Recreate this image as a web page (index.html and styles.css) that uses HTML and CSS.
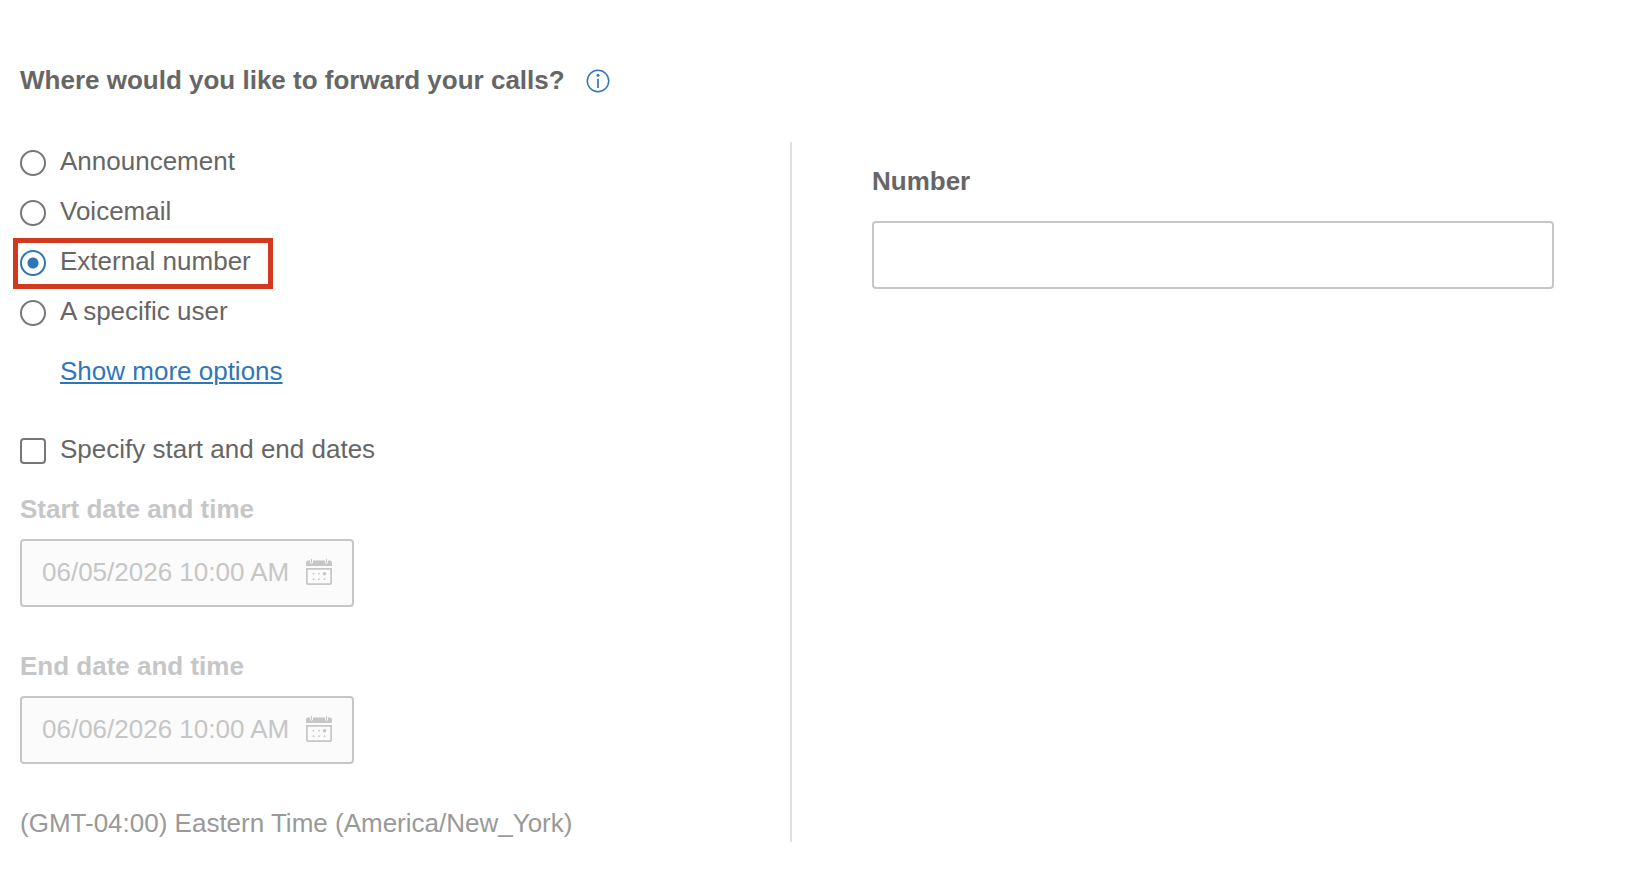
FILE: index.html
```html
<!DOCTYPE html>
<html lang="en">
<head>
    <meta charset="UTF-8">
    <meta name="viewport" content="width=device-width, initial-scale=1.0">
    <title>Call forwarding</title>
    <link rel="stylesheet" href="styles.css">
</head>
<body>

    <form class="forwarding">
        <div class="heading">
            <h1 id="forward-title">Where would you like to forward your calls?</h1>
            <button type="button" class="info-button" aria-label="More information">
                <svg width="24" height="24" viewBox="0 0 24 24" fill="none" stroke="currentColor">
                    <circle cx="12" cy="12" r="10.7" stroke-width="1.5"/>
                    <path d="M12 9.7v9.3" stroke-width="1.7"/>
                    <circle cx="12" cy="6.3" r="1.5" fill="currentColor" stroke="none"/>
                </svg>
            </button>
        </div>

        <div class="columns">
            <!-- Destination and schedule -->
            <div class="column-left">
                <div class="options" role="radiogroup" aria-labelledby="forward-title">
                    <label class="option"><input type="radio" name="destination" value="announcement">Announcement</label>
                    <label class="option"><input type="radio" name="destination" value="voicemail">Voicemail</label>
                    <label class="option highlighted"><input type="radio" name="destination" value="external" checked>External number</label>
                    <label class="option"><input type="radio" name="destination" value="user">A specific user</label>
                </div>
                <a href="#" class="more-link">Show more options</a>

                <label class="option schedule"><input type="checkbox" name="schedule">Specify start and end dates</label>

                <div class="date-field">
                    <label for="start-date">Start date and time</label>
                    <div class="date-box">
                        <input type="text" id="start-date" value="06/05/2026 10:00 AM" disabled>
                        <svg class="calendar" width="26" height="26" viewBox="0 0 26 26" fill="currentColor">
                            <path d="M0 7V3.5Q0 1.5 2 1.5H4V3Q4 4.7 5.5 4.7T7 3V1.5H19V3Q19 4.7 20.5 4.7T22 3V1.5H24Q26 1.5 26 3.5V7Z"/>
                            <path d="M5 0h1v4H5zM20 0h1v4h-1z"/>
                            <path fill-rule="evenodd" d="M0 9H26V24Q26 26 24 26H2Q0 26 0 24ZM1.7 10.7V23.5Q1.7 24.3 2.5 24.3H23.5Q24.3 24.3 24.3 23.5V10.7Z"/>
                            <circle cx="7.5" cy="14.7" r="0.9"/>
                            <circle cx="13" cy="14.7" r="0.9"/>
                            <circle cx="18.5" cy="14.7" r="1.8"/>
                            <circle cx="7.5" cy="20.2" r="0.9"/>
                            <circle cx="13" cy="20.2" r="0.9"/>
                            <circle cx="18.5" cy="20.2" r="0.9"/>
                        </svg>
                    </div>
                </div>

                <div class="date-field">
                    <label for="end-date">End date and time</label>
                    <div class="date-box">
                        <input type="text" id="end-date" value="06/06/2026 10:00 AM" disabled>
                        <svg class="calendar" width="26" height="26" viewBox="0 0 26 26" fill="currentColor">
                            <path d="M0 7V3.5Q0 1.5 2 1.5H4V3Q4 4.7 5.5 4.7T7 3V1.5H19V3Q19 4.7 20.5 4.7T22 3V1.5H24Q26 1.5 26 3.5V7Z"/>
                            <path d="M5 0h1v4H5zM20 0h1v4h-1z"/>
                            <path fill-rule="evenodd" d="M0 9H26V24Q26 26 24 26H2Q0 26 0 24ZM1.7 10.7V23.5Q1.7 24.3 2.5 24.3H23.5Q24.3 24.3 24.3 23.5V10.7Z"/>
                            <circle cx="7.5" cy="14.7" r="0.9"/>
                            <circle cx="13" cy="14.7" r="0.9"/>
                            <circle cx="18.5" cy="14.7" r="1.8"/>
                            <circle cx="7.5" cy="20.2" r="0.9"/>
                            <circle cx="13" cy="20.2" r="0.9"/>
                            <circle cx="18.5" cy="20.2" r="0.9"/>
                        </svg>
                    </div>
                </div>

                <p class="timezone">(GMT-04:00) Eastern Time (America/New_York)</p>
            </div>

            <!-- Settings of the selected destination -->
            <div class="column-right">
                <label for="number">Number</label>
                <input type="text" id="number" class="number-input">
            </div>
        </div>
    </form>

</body>
</html>
```
FILE: styles.css
```css
* {
    box-sizing: border-box;
}
body {
    margin: 0;
    background-color: #fff;
    color: #666;
    font-family: "Liberation Sans", Arial, sans-serif;
    font-size: 26px;
    line-height: 38px;
}
input {
    margin: 0;
    font: inherit;
    color: inherit;
}
.forwarding {
    padding: 61px 68px 20px 20px;
}
.heading {
    display: flex;
    align-items: center;
    gap: 21px;
    margin-bottom: 43px;
}
h1 {
    margin: 0;
    font-size: 26px;
}
.info-button {
    display: flex;
    padding: 2px 0 0;
    border: none;
    background: none;
    color: #2f76b9;
    cursor: pointer;
}
.columns {
    display: grid;
    grid-template-columns: 1fr 1fr;
}
.column-left {
    border-right: 2px solid #e0e0e0;
}
.column-right {
    padding: 20px 10px 0 80px;
    font-weight: bold;
}
.options {
    display: flex;
    flex-direction: column;
    gap: 12px;
}
.option {
    position: relative;
    display: flex;
    align-items: flex-start;
    gap: 14px;
    width: fit-content;
}
.option input {
    appearance: none;
    flex: none;
    width: 26px;
    height: 26px;
    margin-top: 8px;
    border: 2px solid #777;
    border-radius: 4px;
    background-color: #fff;
}
.option input[type="radio"] {
    border-radius: 50%;
}
.option input[type="radio"]:checked {
    border-color: #2f76b9;
    background: radial-gradient(circle, #2f76b9 5px, #fff 6px);
}
/* Red frame around the chosen option */
.highlighted::after {
    content: "";
    position: absolute;
    inset: -4px -22px -9px -7px;
    border: 5px solid #d13a21;
    pointer-events: none;
}
.more-link {
    display: block;
    width: fit-content;
    margin: 22px 0 40px 40px;
    color: #2f76b9;
    text-decoration-thickness: 2px;
    text-underline-offset: 2px;
}
.schedule {
    margin-bottom: 22px;
}
.date-field {
    margin-bottom: 40px;
    color: #c6c6c6;
}
.date-field label {
    display: block;
    margin-bottom: 11px;
    font-weight: bold;
}
.date-box {
    display: flex;
    align-items: center;
    width: 334px;
    height: 68px;
    padding: 0 20px 2px;
    border: 2px solid #c6c6c6;
    border-radius: 4px;
    background-color: #fbfbfb;
}
.date-box input {
    flex: 1;
    min-width: 0;
    padding: 0;
    border: none;
    background: none;
}
.calendar {
    flex: none;
}
.timezone {
    margin: 0;
    color: #999;
}
.number-input {
    display: block;
    width: 100%;
    height: 68px;
    margin-top: 21px;
    padding: 0 20px;
    border: 2px solid #c6c6c6;
    border-radius: 4px;
    background-color: #fff;
}
```
